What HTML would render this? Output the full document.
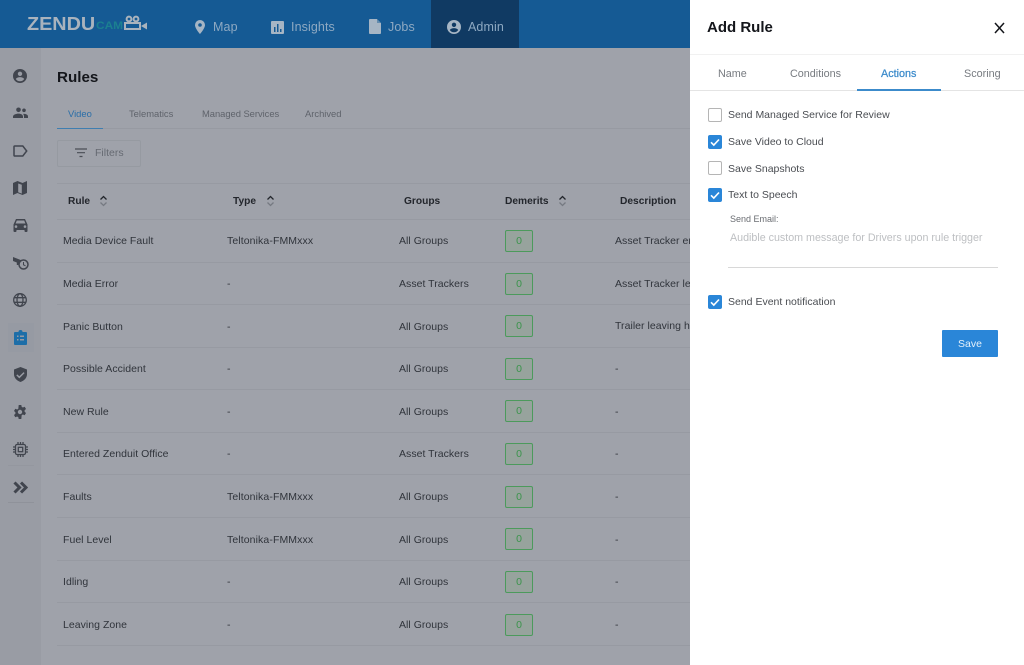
<!DOCTYPE html>
<html><head><meta charset="utf-8">
<style>
html,body{margin:0;padding:0}
body{width:1024px;height:665px;overflow:hidden;position:relative;background:#9fa2aa;font-family:"Liberation Sans",sans-serif;color:#34383f}
.a{position:absolute;white-space:nowrap}
svg{position:absolute;display:block}
.nav{left:0;top:0;width:690px;height:48px;background:#155a94}
.nv{top:19px;font-size:12.5px;line-height:16px;color:#8ea9c2;letter-spacing:.1px}
.side{left:0;top:48px;width:41px;height:617px;background:#999ca4}
.c{font-size:10.5px;line-height:14px;color:#30343b;letter-spacing:.03px;margin-top:1px}
.h{font-size:10.2px;line-height:14px;font-weight:bold;color:#23262c;margin-top:1px}
.t{font-size:9.4px;line-height:12px;color:#5f636b;margin-top:1px}
.ln{height:1px;background:#979aa2;left:57px;width:633px}
.b{left:505px;width:26px;height:20px;border:1px solid #4c9a5c;border-radius:2px;background:#97a39d;color:#3a944b;font-size:10.5px;line-height:20px;text-align:center}
.panel{left:690px;top:0;width:334px;height:665px;background:#fff}
.tab{top:67px;font-size:10.8px;line-height:14px;color:#777b80}
.cb{left:708px;width:12px;height:12px;border:1px solid #b5b5b5;border-radius:2px;background:#fff}
.cbk{left:708px;width:14px;height:14px;border-radius:2px;background:#2a86d8}
.l{left:728px;font-size:10.5px;line-height:14px;color:#4a4d52;margin-top:1px}
</style></head><body>

<div class="a nav"></div>
<div class="a" style="left:431px;top:0;width:88px;height:48px;background:#103a63"></div>

<div class="a" style="left:27px;top:13px;font-size:18px;line-height:22px;font-weight:bold;color:#a9b3bd;transform:scaleX(1.1);transform-origin:left">ZENDU</div>
<div class="a" style="left:96px;top:20px;font-size:11px;line-height:13px;font-weight:bold;color:#1b8090;transform:scaleX(1.08);transform-origin:left">CAM</div>
<svg style="left:124px;top:15px" width="24" height="17" viewBox="0 0 24 17"><g fill="none" stroke="#a9b3bd" stroke-width="2"><circle cx="5" cy="4" r="2.400"/><circle cx="12" cy="4" r="2.400"/><rect x="1" y="8" width="15" height="6"/></g><path d="M17 11l6-3.500v7z" fill="#a9b3bd"/></svg>

<svg style="left:193px;top:19px" width="14" height="16" viewBox="0 0 14 16"><path fill-rule="evenodd" d="M7 1a5 5 0 0 0-5 5c0 3.600 5 9 5 9s5-5.400 5-9a5 5 0 0 0-5-5zm0 6.800A1.800 1.800 0 1 1 7 4.200a1.800 1.800 0 0 1 0 3.600z" fill="#a6b5c4"/></svg>
<div class="a nv" style="left:213px">Map</div>
<svg style="left:271px;top:21px" width="13" height="13" viewBox="0 0 13 13"><path fill-rule="evenodd" d="M1 0h11a1 1 0 0 1 1 1v11a1 1 0 0 1-1 1H1a1 1 0 0 1-1-1V1a1 1 0 0 1 1-1zm2 6v5h1.500V6zm3-3v8h1.500V3zm3 5v3h1.500V8z" fill="#a6b5c4"/></svg>
<div class="a nv" style="left:291px">Insights</div>
<svg style="left:369px;top:19px" width="12" height="15" viewBox="0 0 12 15"><path d="M1 0h7l4 4v10a1 1 0 0 1-1 1H1a1 1 0 0 1-1-1V1a1 1 0 0 1 1-1z" fill="#a6b5c4"/><path d="M8 0v4h4z" fill="#155a94" opacity=".45"/></svg>
<div class="a nv" style="left:388px">Jobs</div>
<svg style="left:447px;top:20px" width="14" height="14" viewBox="0 0 14 14"><path fill-rule="evenodd" d="M7 0a7 7 0 1 0 0 14A7 7 0 0 0 7 0zm0 2.600a2.200 2.200 0 1 1 0 4.400 2.200 2.200 0 0 1 0-4.400zM2.800 10c.8-1.300 2.500-1.900 4.200-1.900s3.400.6 4.200 1.900A5.200 5.200 0 0 1 7 12.300 5.200 5.200 0 0 1 2.800 10z" fill="#a6b5c4"/></svg>
<div class="a nv" style="left:468px">Admin</div>

<div class="a side"></div>
<div class="a" style="left:8px;top:323px;width:26px;height:29px;background:#969aa3"></div>

<svg style="left:13px;top:69px" width="14" height="14" viewBox="0 0 14 14"><path fill-rule="evenodd" d="M7 0a7 7 0 1 0 0 14A7 7 0 0 0 7 0zm0 2.600a2.200 2.200 0 1 1 0 4.400 2.200 2.200 0 0 1 0-4.400zM2.800 10c.8-1.300 2.500-1.900 4.200-1.900s3.400.6 4.200 1.900A5.200 5.200 0 0 1 7 12.300 5.200 5.200 0 0 1 2.800 10z" fill="#41454e"/></svg>
<svg style="left:13px;top:107px" width="15" height="12" viewBox="0 0 15 12"><circle cx="5.500" cy="2.800" r="2.300" fill="#41454e"/><circle cx="11" cy="3.300" r="1.800" fill="#41454e"/><path d="M0 11V9.500C0 7.800 3 6.600 5.500 6.600S10 7.800 10 9.500V11zM11 11V9.300c0-1-.4-1.800-1-2.400 2.200-.3 5 .6 5 2.400V11z" fill="#41454e"/></svg>
<svg style="left:13px;top:145px" width="15" height="12" viewBox="0 0 15 12"><path d="M1.800 1h8l3.900 5-3.900 5h-8a.8.8 0 0 1-.8-.8V1.800A.8.800 0 0 1 1.800 1z" fill="none" stroke="#41454e" stroke-width="1.500"/></svg>
<svg style="left:13px;top:181px" width="14" height="14" viewBox="0 0 14 14"><path fill-rule="evenodd" d="M0 2l4.500-2L9.500 2 14 0v12l-4.500 2-5-2L0 14zM5.200 2.500v8.800l3.600 1.300V3.800z" fill="#41454e"/></svg>
<svg style="left:13px;top:218px" width="15" height="14" viewBox="0 0 15 14"><path fill-rule="evenodd" d="M3 1h9l2.500 5.500V13a1 1 0 0 1-1 1h-1a1 1 0 0 1-1-1v-1H3.500v1a1 1 0 0 1-1 1h-1a1 1 0 0 1-1-1V6.500zm.8 1.500L2.600 5.500h9.800l-1.200-3zM3 7.300a1.300 1.300 0 1 0 0 2.600 1.300 1.300 0 0 0 0-2.600zm9 0a1.300 1.300 0 1 0 0 2.600 1.300 1.300 0 0 0 0-2.600z" fill="#41454e"/></svg>
<svg style="left:13px;top:256px" width="16" height="14" viewBox="0 0 16 14"><path d="M0 1l9 3.500c-2 .8-3.300 2.300-3.700 4.500H3.800V6.500L0 5z" fill="#41454e"/><circle cx="10.500" cy="8.500" r="4.500" fill="none" stroke="#41454e" stroke-width="1.500"/><path d="M10.500 6v2.800l2 1" fill="none" stroke="#41454e"/></svg>
<svg style="left:13px;top:293px" width="14" height="14" viewBox="0 0 14 14"><g fill="none" stroke="#41454e" stroke-width="1.300"><circle cx="7" cy="7" r="6.300"/><ellipse cx="7" cy="7" rx="3" ry="6.300"/><path d="M1 4.700h12M1 9.300h12"/></g></svg>
<svg style="left:14px;top:330px" width="13" height="15" viewBox="0 0 13 15"><path fill-rule="evenodd" d="M1 2h3.500a2 2 0 0 1 4 0H12a1 1 0 0 1 1 1v11a1 1 0 0 1-1 1H1a1 1 0 0 1-1-1V3a1 1 0 0 1 1-1zm2 3.500v1.500h1.500V5.500zm3 0v1.500h4V5.500zm-3 3.500v1.500h1.500V9zm3 0v1.500h4V9z" fill="#1d6ea8"/></svg>
<svg style="left:14px;top:367px" width="13" height="15" viewBox="0 0 13 15"><path fill-rule="evenodd" d="M6.500 0L13 2.500v4.800c0 3.500-2.700 6.500-6.500 7.700C2.700 13.800 0 10.800 0 7.300V2.500zM3.300 7.400l-1 1 3 3 5.300-5.300-1-1-4.300 4.200z" fill="#41454e"/></svg>
<svg style="left:13px;top:405px" width="14" height="14" viewBox="0 0 14 14"><path fill-rule="evenodd" d="M5.700 0h2.600l.4 1.900 1.200.6 1.800-.7 1.300 2.200-1.400 1.300v1.400l1.400 1.300-1.300 2.200-1.800-.7-1.200.6L8.300 14H5.700l-.4-1.900-1.200-.6-1.800.7L1 10l1.400-1.300V7.300L1 6l1.300-2.200 1.800.7 1.200-.6zM7 4.800a2.200 2.200 0 1 0 0 4.400 2.200 2.200 0 0 0 0-4.400z" fill="#41454e"/></svg>
<svg style="left:13px;top:442px" width="15" height="15" viewBox="0 0 15 15"><g fill="none" stroke="#41454e" stroke-width="1.300"><rect x="2.500" y="2.500" width="10" height="10" rx="1.500"/><rect x="5.300" y="5.300" width="4.400" height="4.400"/><path d="M5 0v2.500M7.500 0v2.500M10 0v2.500M5 12.500V15M7.500 12.500V15M10 12.500V15M0 5h2.500M0 7.500h2.500M0 10h2.500M12.500 5H15M12.500 7.500H15M12.500 10H15"/></g></svg>
<svg style="left:13px;top:481px" width="15" height="13" viewBox="0 0 15 13"><path d="M1.500 1.500l5 5-5 5M8 1.500l5 5-5 5" fill="none" stroke="#41454e" stroke-width="3"/></svg>
<div class="a" style="left:8px;top:502px;width:26px;height:1px;background:#8f929a"></div>
<div class="a" style="left:8px;top:465px;width:26px;height:1px;background:#94979f"></div>

<div class="a" style="left:57px;top:69px;font-size:15.200px;line-height:18px;font-weight:bold;color:#14161b">Rules</div>
<div class="a t" style="left:68px;top:107px;color:#2a6ea8">Video</div>
<div class="a t" style="left:129px;top:107px">Telematics</div>
<div class="a t" style="left:202px;top:107px;letter-spacing:-.03px">Managed Services</div>
<div class="a t" style="left:305px;top:107px">Archived</div>
<div class="a" style="left:57px;top:128px;width:633px;height:1px;background:#979aa2"></div>
<div class="a" style="left:57px;top:128px;width:46px;height:1px;background:#3f7eb0"></div>

<div class="a" style="left:57px;top:140px;width:82px;height:25px;border:1px solid #969aa1;border-radius:2px"></div>
<svg style="left:75px;top:148px" width="12" height="10" viewBox="0 0 12 10"><path d="M0 1h12M2 4.700h8M4.500 8.500h3" stroke="#4a4e56" stroke-width="1.200"/></svg>
<div class="a" style="left:95px;top:147px;font-size:10.500px;line-height:13px;color:#666a72">Filters</div>

<div class="a" style="left:57px;top:183px;width:633px;height:1px;background:#979aa2"></div>
<div class="a h" style="left:68px;top:194px">Rule</div>
<div class="a h" style="left:233px;top:194px">Type</div>
<div class="a h" style="left:404px;top:194px">Groups</div>
<div class="a h" style="left:505px;top:194px">Demerits</div>
<div class="a h" style="left:620px;top:194px">Description</div>
<svg style="left:99px;top:195px" width="9" height="12" viewBox="0 0 9 12"><path d="M1.500 4.500l3-3 3 3" fill="none" stroke="#23262c" stroke-width="1.300"/><path d="M1.500 7.500l3 3 3-3" fill="none" stroke="#767a82" stroke-width="1.300"/></svg>
<svg style="left:266px;top:195px" width="9" height="12" viewBox="0 0 9 12"><path d="M1.500 4.500l3-3 3 3" fill="none" stroke="#23262c" stroke-width="1.300"/><path d="M1.500 7.500l3 3 3-3" fill="none" stroke="#767a82" stroke-width="1.300"/></svg>
<svg style="left:558px;top:195px" width="9" height="12" viewBox="0 0 9 12"><path d="M1.500 4.500l3-3 3 3" fill="none" stroke="#23262c" stroke-width="1.300"/><path d="M1.500 7.500l3 3 3-3" fill="none" stroke="#767a82" stroke-width="1.300"/></svg>

<div class="a ln" style="top:219px"></div>
<div class="a ln" style="top:262px"></div>
<div class="a ln" style="top:304px"></div>
<div class="a ln" style="top:347px"></div>
<div class="a ln" style="top:389px"></div>
<div class="a ln" style="top:432px"></div>
<div class="a ln" style="top:474px"></div>
<div class="a ln" style="top:517px"></div>
<div class="a ln" style="top:560px"></div>
<div class="a ln" style="top:602px"></div>
<div class="a ln" style="top:645px"></div>

<div class="a c" style="left:63px;top:233px">Media Device Fault</div><div class="a c" style="left:227px;top:233px;letter-spacing:.1px">Teltonika-FMMxxx</div><div class="a c" style="left:399px;top:233px">All Groups</div><div class="a b" style="top:230px">0</div><div class="a c" style="left:615px;top:233px">Asset Tracker entering zone</div>
<div class="a c" style="left:63px;top:276px">Media Error</div><div class="a c" style="left:227px;top:276px">-</div><div class="a c" style="left:399px;top:276px">Asset Trackers</div><div class="a b" style="top:273px">0</div><div class="a c" style="left:615px;top:276px">Asset Tracker leaving zone</div>
<div class="a c" style="left:63px;top:319px">Panic Button</div><div class="a c" style="left:227px;top:319px">-</div><div class="a c" style="left:399px;top:319px">All Groups</div><div class="a b" style="top:315px">0</div><div class="a c" style="left:615px;top:318px">Trailer leaving home zone</div>
<div class="a c" style="left:63px;top:361px">Possible Accident</div><div class="a c" style="left:227px;top:361px">-</div><div class="a c" style="left:399px;top:361px">All Groups</div><div class="a b" style="top:358px">0</div><div class="a c" style="left:615px;top:361px">-</div>
<div class="a c" style="left:63px;top:404px">New Rule</div><div class="a c" style="left:227px;top:404px">-</div><div class="a c" style="left:399px;top:404px">All Groups</div><div class="a b" style="top:400px">0</div><div class="a c" style="left:615px;top:404px">-</div>
<div class="a c" style="left:63px;top:446px">Entered Zenduit Office</div><div class="a c" style="left:227px;top:446px">-</div><div class="a c" style="left:399px;top:446px">Asset Trackers</div><div class="a b" style="top:443px">0</div><div class="a c" style="left:615px;top:446px">-</div>
<div class="a c" style="left:63px;top:489px">Faults</div><div class="a c" style="left:227px;top:489px;letter-spacing:.1px">Teltonika-FMMxxx</div><div class="a c" style="left:399px;top:489px">All Groups</div><div class="a b" style="top:486px">0</div><div class="a c" style="left:615px;top:489px">-</div>
<div class="a c" style="left:63px;top:532px">Fuel Level</div><div class="a c" style="left:227px;top:532px;letter-spacing:.1px">Teltonika-FMMxxx</div><div class="a c" style="left:399px;top:532px">All Groups</div><div class="a b" style="top:528px">0</div><div class="a c" style="left:615px;top:532px">-</div>
<div class="a c" style="left:63px;top:574px">Idling</div><div class="a c" style="left:227px;top:574px">-</div><div class="a c" style="left:399px;top:574px">All Groups</div><div class="a b" style="top:571px">0</div><div class="a c" style="left:615px;top:574px">-</div>
<div class="a c" style="left:63px;top:617px">Leaving Zone</div><div class="a c" style="left:227px;top:617px">-</div><div class="a c" style="left:399px;top:617px">All Groups</div><div class="a b" style="top:614px">0</div><div class="a c" style="left:615px;top:617px">-</div>

<div class="a panel"></div>
<div class="a" style="left:707px;top:18px;font-size:15px;line-height:20px;font-weight:bold;color:#14161b">Add Rule</div>
<svg style="left:994px;top:22px" width="11" height="12" viewBox="0 0 11 12"><path d="M1 1l9 10M10 1L1 11" stroke="#14161b" stroke-width="1.500"/></svg>
<div class="a" style="left:690px;top:54px;width:334px;height:1px;background:#f1f1f1"></div>
<div class="a tab" style="left:718px">Name</div>
<div class="a tab" style="left:790px">Conditions</div>
<div class="a tab" style="left:881px;color:#3c8bcb;-webkit-text-stroke:.25px #3c8bcb">Actions</div>
<div class="a tab" style="left:964px">Scoring</div>
<div class="a" style="left:690px;top:90px;width:334px;height:1px;background:#e4e4e4"></div>
<div class="a" style="left:857px;top:89px;width:84px;height:2px;background:#3c8bcb"></div>

<div class="a cb" style="top:108px"></div>
<div class="a l" style="top:107px">Send Managed Service for Review</div>
<div class="a cbk" style="top:135px"></div>
<svg style="left:708px;top:135px" width="14" height="14" viewBox="0 0 14 14"><path d="M3 7.300l2.800 2.800L11 4.500" fill="none" stroke="#fff" stroke-width="1.600"/></svg>
<div class="a l" style="top:134px">Save Video to Cloud</div>
<div class="a cb" style="top:161px"></div>
<div class="a l" style="top:161px">Save Snapshots</div>
<div class="a cbk" style="top:188px"></div>
<svg style="left:708px;top:188px" width="14" height="14" viewBox="0 0 14 14"><path d="M3 7.300l2.800 2.800L11 4.500" fill="none" stroke="#fff" stroke-width="1.600"/></svg>
<div class="a l" style="top:187px">Text to Speech</div>
<div class="a" style="left:730px;top:213px;font-size:9px;line-height:12px;color:#6a6d72">Send Email:</div>
<div class="a" style="left:730px;top:231px;font-size:10.700px;line-height:14px;color:#bdbfc2;margin-top:0">Audible custom message for Drivers upon rule trigger</div>
<div class="a" style="left:728px;top:267px;width:270px;height:1px;background:#d8d8d8"></div>
<div class="a cbk" style="top:295px"></div>
<svg style="left:708px;top:295px" width="14" height="14" viewBox="0 0 14 14"><path d="M3 7.300l2.800 2.800L11 4.500" fill="none" stroke="#fff" stroke-width="1.600"/></svg>
<div class="a l" style="top:294px">Send Event notification</div>
<div class="a" style="left:942px;top:330px;width:56px;height:27px;background:#2a86d8;border-radius:1px;color:#e4f0fa;font-size:10.500px;line-height:28px;text-align:center">Save</div>

</body></html>
